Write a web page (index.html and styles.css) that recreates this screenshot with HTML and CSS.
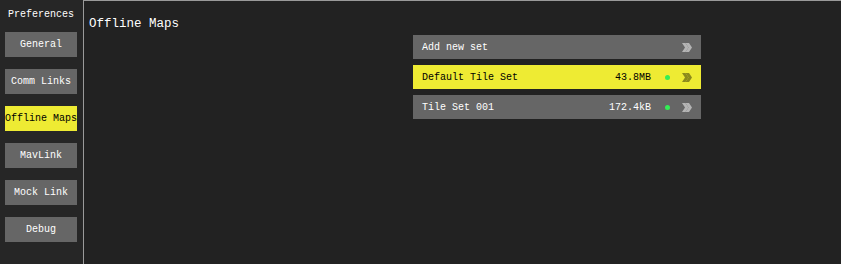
FILE: index.html
```
<!DOCTYPE html>
<html lang="en">
<head>
  <meta charset="UTF-8"/>
  <title>Preferences</title>
  <link rel="stylesheet" href="styles.css">
</head>
<body>
  <div class="app">
    <aside class="sidebar">
      <div class="side-title">Preferences</div>
      <button class="side-btn">General</button>
      <button class="side-btn">Comm Links</button>
      <button class="side-btn active">Offline Maps</button>
      <button class="side-btn">MavLink</button>
      <button class="side-btn">Mock Link</button>
      <button class="side-btn">Debug</button>
    </aside>

    <main class="content">
      <h1>Offline Maps</h1>

      <div class="sets">
        <div class="set-row">
          <span class="set-name">Add new set</span>
          <svg class="chev" viewBox="0 0 10 9"><polygon points="0,0 3.5,0 6.5,4.5 3.5,9 0,9 3,4.5"/><polygon points="3.5,0 7,0 10,4.5 7,9 3.5,9 6.5,4.5"/></svg>
        </div>
        <div class="set-row selected">
          <span class="set-name">Default Tile Set</span>
          <span class="set-size">43.8MB</span>
          <span class="dot"></span>
          <svg class="chev" viewBox="0 0 10 9"><polygon points="0,0 3.5,0 6.5,4.5 3.5,9 0,9 3,4.5"/><polygon points="3.5,0 7,0 10,4.5 7,9 3.5,9 6.5,4.5"/></svg>
        </div>
        <div class="set-row">
          <span class="set-name">Tile Set 001</span>
          <span class="set-size">172.4kB</span>
          <span class="dot"></span>
          <svg class="chev" viewBox="0 0 10 9"><polygon points="0,0 3.5,0 6.5,4.5 3.5,9 0,9 3,4.5"/><polygon points="3.5,0 7,0 10,4.5 7,9 3.5,9 6.5,4.5"/></svg>
        </div>
      </div>
    </main>
  </div>
</body>
</html>
```

FILE: styles.css
```
body {
  margin: 0;
  background-color: #222;
  font-family: 'Liberation Mono', 'DejaVu Sans Mono', monospace;
  color: #fff;
}

.app {
  display: flex;
  height: 264px;
}

.sidebar {
  width: 78px;
  padding: 7px 0 0 5px;
  background-color: #262626;
  display: flex;
  flex-direction: column;
}

.side-title {
  width: 72px;
  text-align: center;
  font-size: 10px;
  line-height: 16px;
  margin-bottom: 9px;
}

.side-btn {
  width: 72px;
  height: 25px;
  margin-bottom: 12px;
  padding: 0;
  border: none;
  background-color: #666;
  color: #fff;
  font-family: inherit;
  font-size: 10px;
  white-space: nowrap;
  cursor: pointer;
}

.side-btn.active {
  background-color: #eeeb33;
  color: #000;
}

.content {
  flex: 1;
  border-top: 1px solid #9a9a9a;
  border-left: 1px solid #9a9a9a;
  padding: 15px 0 0 5px;
}

h1 {
  margin: 0 0 3px;
  font-size: 12.5px;
  font-weight: normal;
  line-height: 16px;
}

.sets {
  margin-left: 324px;
  width: 288px;
  display: flex;
  flex-direction: column;
  gap: 6px;
}

.set-row {
  height: 24px;
  display: flex;
  align-items: center;
  padding: 0 9px;
  background-color: #666;
  font-size: 10px;
}

.set-row.selected {
  background-color: #eeeb33;
  color: #000;
}

.set-name {
  flex: 1;
}

.dot {
  width: 5px;
  height: 5px;
  margin-left: 14px;
  border-radius: 50%;
  background-color: #33ee55;
}

.chev {
  width: 10px;
  height: 9px;
  margin-left: 12px;
  fill: #b4b4b4;
}

.selected .chev {
  fill: #8c8a1c;
}
```
